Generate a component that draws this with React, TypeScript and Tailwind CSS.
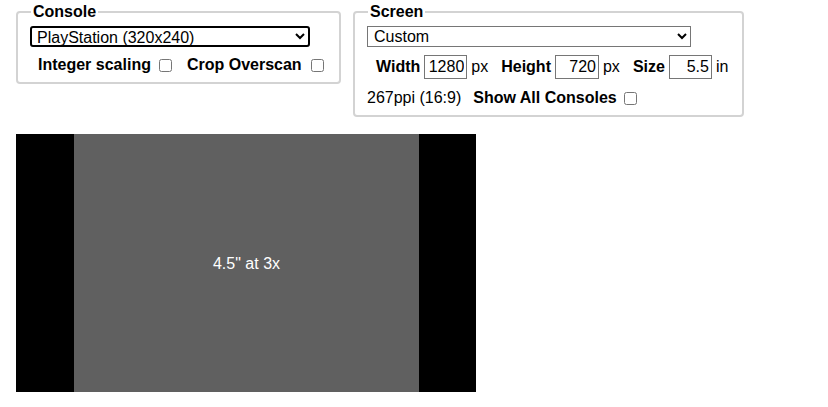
import { useState } from 'react';

const consoles = ['PlayStation (320x240)', 'SNES (256x224)', 'Genesis (320x224)', 'NES (256x240)', 'Game Boy (160x144)'];
const screens = ['Custom', 'Retroid Pocket 2 (640x480)', 'Anbernic RG35XX (640x480)', 'Steam Deck (1280x800)'];

export default function App() {
  const [consoleName, setConsoleName] = useState(consoles[0]);
  const [screen, setScreen] = useState(screens[0]);
  const [width, setWidth] = useState('1280');
  const [height, setHeight] = useState('720');
  const [size, setSize] = useState('5.5');

  return (
    <main
      className="min-h-screen bg-white text-black text-[16px] leading-[normal] pl-[16px] pt-[3px]"
      style={{ fontFamily: '"Liberation Sans", Arial, sans-serif' }}
    >
      <div className="flex items-start gap-[12px]">
        <fieldset className="w-[325px] border-2 border-[#d3d3d3] rounded-[4px] px-[12px] pb-[8px]">
          <legend className="font-bold px-[2px] ml-[1px]">Console</legend>
          <select
            value={consoleName}
            onChange={(e) => setConsoleName(e.target.value)}
            className="block w-[280px] h-[21px] border-2 border-black rounded-[3px] pl-[1px] mt-[5px] text-[16px] leading-[normal]"
          >
            {consoles.map((c) => (
              <option key={c}>{c}</option>
            ))}
          </select>
          <div className="flex items-center h-[18px] mt-[9px] pl-[8px] gap-[15px] font-bold">
            <label className="flex items-center">
              Integer scaling
              <input type="checkbox" className="m-0 ml-[8px] w-[13px] h-[13px]" />
            </label>
            <label className="flex items-center">
              Crop Overscan
              <input type="checkbox" className="m-0 ml-[9px] w-[13px] h-[13px]" />
            </label>
          </div>
        </fieldset>

        <fieldset className="w-[391px] border-2 border-[#d3d3d3] rounded-[4px] px-[12px] pb-[8px]">
          <legend className="font-bold px-[2px] ml-[1px]">Screen</legend>
          <select
            value={screen}
            onChange={(e) => setScreen(e.target.value)}
            className="block w-[324px] h-[21px] border border-[#767676] pl-[2px] mt-[5px] text-[16px] leading-[normal]"
          >
            {screens.map((s) => (
              <option key={s}>{s}</option>
            ))}
          </select>
          <div className="flex items-center h-[24px] mt-[8px] pl-[9px] gap-[13px]">
            <label className="flex items-center">
              <span className="font-bold mr-[4px]">Width</span>
              <input
                value={width}
                onChange={(e) => setWidth(e.target.value)}
                className="w-[43px] h-[24px] border border-[#767676] text-right pr-[2px]"
              />
              <span className="ml-[4px]">px</span>
            </label>
            <label className="flex items-center">
              <span className="font-bold mr-[4px]">Height</span>
              <input
                value={height}
                onChange={(e) => setHeight(e.target.value)}
                className="w-[44px] h-[24px] border border-[#767676] text-right pr-[2px]"
              />
              <span className="ml-[4px]">px</span>
            </label>
            <label className="flex items-center">
              <span className="font-bold mr-[4px]">Size</span>
              <input
                value={size}
                onChange={(e) => setSize(e.target.value)}
                className="w-[43px] h-[24px] border border-[#767676] text-right pr-[2px]"
              />
              <span className="ml-[4px]">in</span>
            </label>
          </div>
          <div className="flex items-center h-[18px] mt-[10px] gap-[12px]">
            <span>267ppi (16:9)</span>
            <label className="flex items-center font-bold">
              Show All Consoles
              <input type="checkbox" className="m-0 ml-[7px] w-[13px] h-[13px]" />
            </label>
          </div>
        </fieldset>
      </div>

      {/* preview: 4:3 image pillarboxed inside a 16:9 panel */}
      <div className="mt-[17px] flex w-[460px] h-[258px] bg-black">
        <div className="w-[58px]" />
        <div className="w-[345px] bg-[#606060] flex items-center justify-center pt-[2px] text-white">
          4.5" at 3x
        </div>
      </div>
    </main>
  );
}
